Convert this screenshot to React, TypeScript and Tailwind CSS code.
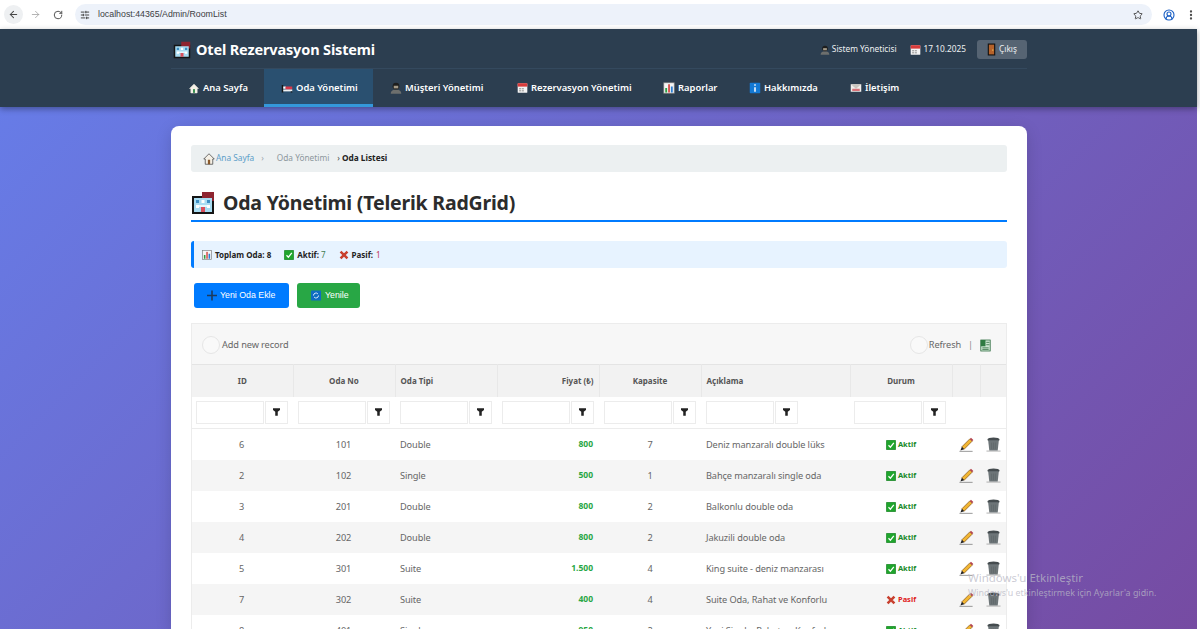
import { ArrowLeft, ArrowRight, RotateCw, Star, CircleUserRound, EllipsisVertical, SlidersHorizontal } from "lucide-react";
import { ReactNode } from "react";

function HotelIcon({ size }: { size: number }) {
  return (
    <svg width={size} height={size} viewBox="0 0 24 24" className="shrink-0">
      <rect x="1" y="5" width="22" height="18" fill="#151515" />
      <rect x="11" y="1" width="12" height="9" fill="#8e2430" />
      <rect x="3" y="7" width="18" height="14" fill="#a9dcf2" />
      <rect x="5" y="9" width="3" height="3" fill="#3f8fc4" />
      <rect x="10.500" y="9" width="3" height="3" fill="#fff" />
      <rect x="16" y="9" width="3" height="3" fill="#3f8fc4" />
      <rect x="5" y="14" width="3" height="3" fill="#fff" />
      <rect x="16" y="14" width="3" height="3" fill="#fff" />
      <rect x="8" y="14" width="8" height="2" fill="#e8f6fc" />
      <rect x="10" y="16" width="4" height="5" fill="#d94f5c" />
    </svg>
  );
}

function HomeIcon({ light }: { light?: boolean }) {
  return (
    <svg width={light ? 10 : 12} height={light ? 11 : 12} viewBox="0 0 16 16" className="shrink-0">
      <path d="M8 1 1 8h2v7h10V8h2z" fill="#f5f0e6" stroke={light ? "#f5f0e6" : "#444"} />
      <rect x="6.500" y="9" width="3" height="6" fill={light ? "#2f8a4a" : "#8a5a2b"} />
    </svg>
  );
}

function BedIcon() {
  return (
    <svg width="12" height="12" viewBox="0 0 16 16" className="shrink-0">
      <rect x="1" y="4" width="2" height="10" fill="#151515" />
      <rect x="3" y="6" width="3.500" height="3" fill="#fff" />
      <rect x="6" y="6" width="9" height="4" fill="#d8384a" />
      <rect x="3" y="10" width="12" height="2.500" fill="#f1f1f1" />
      <rect x="13" y="12.500" width="2" height="1.500" fill="#151515" />
    </svg>
  );
}

function BustIcon({ size = 12 }: { size?: number }) {
  return (
    <svg width={size} height={size} viewBox="0 0 16 16" className="shrink-0">
      <path d="M1 15.500c0-4 3.500-5.500 7-5.500s7 1.500 7 5.500z" fill="#6d6f6d" />
      <circle cx="8" cy="5.500" r="4.500" fill="#1d1d1d" />
      <rect x="5" y="5" width="6" height="3.500" fill="#a49a88" />
    </svg>
  );
}

function CalendarIcon() {
  return (
    <svg width="11" height="12" viewBox="0 0 16 16" className="shrink-0">
      <rect x="1" y="1" width="14" height="14" rx="1" fill="#f3f3f3" />
      <rect x="1" y="1" width="14" height="5" fill="#d83b3b" />
      <rect x="3" y="8" width="3" height="2" fill="#aaa" />
      <rect x="7" y="8" width="3" height="2" fill="#aaa" />
      <rect x="3" y="11" width="3" height="2" fill="#aaa" />
      <rect x="7" y="11" width="3" height="2" fill="#aaa" />
    </svg>
  );
}

function ChartIcon({ size = 12 }: { size?: number }) {
  return (
    <svg width={size} height={size} viewBox="0 0 16 16" className="shrink-0">
      <rect x="1" y="1" width="14" height="14" fill="#f5f5f5" stroke="#777" />
      <rect x="3" y="8" width="2.500" height="6" fill="#2f9e44" />
      <rect x="6.800" y="3" width="2.500" height="11" fill="#d9534f" />
      <rect x="10.500" y="6" width="2.500" height="8" fill="#2d7fd3" />
    </svg>
  );
}

function InfoIcon() {
  return (
    <svg width="12" height="12" viewBox="0 0 16 16" className="shrink-0">
      <rect x="1" y="1" width="14" height="14" rx="1" fill="#1479d4" />
      <rect x="7" y="3" width="2" height="2" fill="#fff" />
      <rect x="7" y="7" width="2" height="6" fill="#fff" />
    </svg>
  );
}

function MailIcon() {
  return (
    <svg width="12" height="12" viewBox="0 0 16 16" className="shrink-0">
      <rect x="1" y="3" width="14" height="10" fill="#f1efec" />
      <path d="M1 3h14L8 9z" fill="#c9c5c0" />
      <rect x="3" y="9" width="10" height="3" fill="#d8737a" />
    </svg>
  );
}

function DoorIcon() {
  return (
    <svg width="9" height="13" viewBox="0 0 12 16" className="shrink-0">
      <rect x="1" y="0" width="10" height="16" fill="#111" />
      <rect x="2.500" y="1.500" width="7" height="13" fill="#b5622a" />
      <rect x="7" y="8" width="1.500" height="1.500" fill="#f0d060" />
    </svg>
  );
}

function CheckBox({ size = 10 }: { size?: number }) {
  return (
    <svg width={size} height={size} viewBox="0 0 16 16" className="shrink-0">
      <rect x="0.500" y="0.500" width="15" height="15" rx="1" fill="#1fa52c" stroke="#14781e" />
      <path d="M4 8.500 7 11.500 12.500 4.500" fill="none" stroke="#fff" strokeWidth="2" />
    </svg>
  );
}

function CrossMark({ size = 10 }: { size?: number }) {
  return (
    <svg width={size} height={size} viewBox="0 0 16 16" className="shrink-0">
      <path d="M2.500 2.500 13.500 13.500M13.500 2.500 2.500 13.500" stroke="#c8402f" strokeWidth="4" />
    </svg>
  );
}

function PlusIcon() {
  return (
    <svg width="10" height="11" viewBox="0 0 16 16" className="shrink-0">
      <path d="M8 0v16M0 8h16" stroke="#1d3a5c" strokeWidth="2.500" />
    </svg>
  );
}

function SyncIcon() {
  return (
    <svg width="10" height="11" viewBox="0 0 16 16" className="shrink-0">
      <rect width="16" height="16" rx="1" fill="#0f6cc0" />
      <path d="M4 8a4 4 0 0 1 7-2.600M12 8a4 4 0 0 1-7 2.600" fill="none" stroke="#e8f3ff" strokeWidth="1.500" />
    </svg>
  );
}

function FilterIcon() {
  return (
    <svg width="7" height="8" viewBox="0 0 10 11">
      <path d="M0 0h10v2.500L6.800 5v6H3.200V5L0 2.500z" fill="#222" />
    </svg>
  );
}

function PencilIcon() {
  return (
    <svg width="15" height="15" viewBox="0 0 16 16" className="shrink-0">
      <path d="M0.500 15.300h14" stroke="#777" strokeWidth="0.800" />
      <path d="M3 10.500 11.500 2 14 4.500 5.500 13z" fill="#f2b632" stroke="#7a4a10" strokeWidth="0.700" />
      <path d="M11.500 2 12.800 0.700 15.300 3.200 14 4.500z" fill="#b5454f" />
      <path d="M3 10.500 1.500 14.500 5.500 13z" fill="#222" />
    </svg>
  );
}

function TrashIcon() {
  return (
    <svg width="15" height="15" viewBox="0 0 16 16" className="shrink-0">
      <path d="M0.500 15h15" stroke="#999" strokeWidth="0.800" />
      <ellipse cx="8" cy="2.800" rx="6.500" ry="2.300" fill="#454c4f" />
      <path d="M2.300 3.500h11.400L12.500 14.500h-9z" fill="#6d7578" />
      <path d="M6 6v7M8 6v7M10 6v7" stroke="#5d6568" strokeWidth="0.700" />
    </svg>
  );
}

function ExcelIcon() {
  return (
    <svg width="11" height="13" viewBox="0 0 14 16">
      <rect x="1" y="1" width="12" height="14" fill="#cfe6d4" stroke="#2f6d40" />
      <rect x="1" y="1" width="6" height="8" fill="#2f7a42" />
      <path d="M3 11h8M3 13h8M8 4h4M8 7h4" stroke="#2f6d40" />
    </svg>
  );
}

function NavItem({ icon, label, active, className }: { icon: ReactNode; label: string; active?: boolean; className: string }) {
  return (
    <div
      className={`flex h-[38px] items-center gap-[3px] border-b-[3px] pl-[17px] pt-[3px] text-[9.400px] font-semibold text-white ${
        active ? "border-[#3498db] bg-[#2a5070]" : "border-transparent"
      } ${className}`}
    >
      <span className="flex w-[12px] justify-center">{icon}</span>
      <span>{label}</span>
    </div>
  );
}

const columns = [
  { label: "ID", w: "w-[101px]", align: "text-center" },
  { label: "Oda No", w: "w-[102px]", align: "text-center" },
  { label: "Oda Tipi", w: "w-[102px]", align: "text-left" },
  { label: "Fiyat (₺)", w: "w-[102px]", align: "text-right" },
  { label: "Kapasite", w: "w-[102px]", align: "text-center" },
  { label: "Açıklama", w: "w-[149px]", align: "text-left" },
  { label: "Durum", w: "w-[102px]", align: "text-center" },
  { label: "", w: "w-[28px]", align: "text-center" },
  { label: "", w: "w-[26px]", align: "text-center" },
];

const rooms = [
  { id: 6, no: 101, type: "Double", price: "800", cap: 7, desc: "Deniz manzaralı double lüks", active: true },
  { id: 2, no: 102, type: "Single", price: "500", cap: 1, desc: "Bahçe manzaralı single oda", active: true },
  { id: 3, no: 201, type: "Double", price: "800", cap: 2, desc: "Balkonlu double oda", active: true },
  { id: 4, no: 202, type: "Double", price: "800", cap: 2, desc: "Jakuzili double oda", active: true },
  { id: 5, no: 301, type: "Suite", price: "1.500", cap: 4, desc: "King suite - deniz manzarası", active: true },
  { id: 7, no: 302, type: "Suite", price: "400", cap: 4, desc: "Suite Oda, Rahat ve Konforlu", active: false },
  { id: 8, no: 401, type: "Single", price: "950", cap: 2, desc: "Yeni Single, Rahat ve Konforlu", active: true },
];

function FilterCell({ tight }: { tight?: boolean }) {
  return (
    <td className={`h-[32px] align-middle ${tight ? "pl-[4px]" : "pl-[5px]"}`}>
      <div className="flex gap-[1px]">
        <div className="h-[23px] w-[68px] border border-[#ececec] bg-white" />
        <div className="flex h-[23px] w-[23px] items-center justify-center border border-[#ececec] bg-white">
          <FilterIcon />
        </div>
      </div>
    </td>
  );
}

export default function App() {
  return (
    <div className="relative flex h-[629px] w-[1200px] flex-col overflow-hidden bg-white font-['Noto_Sans',sans-serif]">
      {/* browser bar */}
      <div className="flex h-[29px] shrink-0 items-center bg-white text-[#474747]">
        <div className="ml-[4px] flex h-[19px] w-[19px] items-center justify-center rounded-full bg-[#eef0f2]">
          <ArrowLeft size={11} strokeWidth={2.2} />
        </div>
        <ArrowRight size={11} strokeWidth={1.6} className="ml-[7px] text-[#9a9a9a]" />
        <RotateCw size={10} strokeWidth={2.2} className="ml-[12px]" />
        <div className="ml-[12px] flex h-[21px] w-[1077px] items-center rounded-full bg-[#edf2fa] pl-[5px] pr-[9px]">
          <SlidersHorizontal size={10} strokeWidth={2.4} />
          <span className="ml-[8px] font-['Liberation_Sans',sans-serif] text-[8.800px] text-[#3c4043]">localhost:44365/Admin/RoomList</span>
          <Star size={10} strokeWidth={2.2} className="ml-auto" />
        </div>
        <CircleUserRound size={12} strokeWidth={2.2} className="ml-[11px] text-[#1a5fc4]" />
        <EllipsisVertical size={12} strokeWidth={2.6} className="ml-[10px]" />
      </div>

      <div className="relative flex min-h-0 flex-1 flex-col pr-[3px]">
        <div className="flex min-h-0 flex-1 flex-col bg-[linear-gradient(135deg,#667eea_0%,#764ba2_100%)]">
          {/* header */}
          <header className="h-[78px] shrink-0 bg-[#2c3e50] shadow-[0_2px_6px_rgba(0,0,0,0.35)]">
            <div className="ml-[171px] mr-[170px] flex h-[40px] items-center border-b border-[#34495e] pl-[2px] pt-[2px]">
              <HotelIcon size={18} />
              <span className="ml-[5px] text-[14.500px] font-bold tracking-[-0.15px] text-white">Otel Rezervasyon Sistemi</span>
              <div className="ml-auto flex items-center text-[8.300px] text-[#ecf0f1]">
                <BustIcon size={10} />
                <span className="ml-[2px]">Sistem Yöneticisi</span>
                <span className="ml-[13px]"><CalendarIcon /></span>
                <span className="ml-[3px]">17.10.2025</span>
                <div className="ml-[11px] flex h-[19px] w-[50px] items-center justify-center gap-[3px] rounded-[3px] bg-[#566473]">
                  <DoorIcon />
                  <span>Çıkış</span>
                </div>
              </div>
            </div>
            <nav className="ml-[171px] flex">
              <NavItem icon={<HomeIcon light />} label="Ana Sayfa" className="w-[93px]" />
              <NavItem icon={<BedIcon />} label="Oda Yönetimi" active className="w-[109px]" />
              <NavItem icon={<BustIcon />} label="Müşteri Yönetimi" className="w-[126px]" />
              <NavItem icon={<CalendarIcon />} label="Rezervasyon Yönetimi" className="w-[147px]" />
              <NavItem icon={<ChartIcon />} label="Raporlar" className="w-[86px]" />
              <NavItem icon={<InfoIcon />} label="Hakkımızda" className="w-[101px]" />
              <NavItem icon={<MailIcon />} label="İletişim" className="w-[81px]" />
            </nav>
          </header>

          {/* main card */}
          <main className="ml-[171px] mr-[170px] mt-[19px] min-h-0 flex-1 overflow-hidden rounded-t-[8px] bg-white px-[20px] pt-[19px] shadow-[0_4px_16px_rgba(0,0,0,0.15)]">
            <div className="flex h-[27px] items-center rounded-[3px] bg-[#ecf0f1] pl-[12px] text-[8.300px]">
              <HomeIcon />
              <span className="ml-[1px] text-[#5d9fc9]">Ana Sayfa</span>
              <span className="ml-[7px] text-[#9aa5ab]">›</span>
              <span className="ml-[13px] text-[#8d979d]">Oda Yönetimi</span>
              <span className="ml-[8px] text-[#444]">›</span>
              <span className="ml-[2px] font-bold text-[#222]">Oda Listesi</span>
            </div>

            <div className="mt-[16px] flex h-[34px] items-center border-b-2 border-[#007bff] pb-[3px]">
              <HotelIcon size={24} />
              <h1 className="ml-[8px] text-[19.500px] font-bold tracking-[-0.2px] text-[#2c2c2c]">Oda Yönetimi (Telerik RadGrid)</h1>
            </div>

            <div className="mt-[19px] flex h-[27px] items-center rounded-[3px] border-l-[3px] border-[#007bff] bg-[#e7f3ff] pl-[8px] pt-[1px] text-[8px] text-[#222]">
              <ChartIcon size={10} />
              <b className="ml-[3px]">Toplam Oda: 8</b>
              <span className="ml-[13px]"><CheckBox /></span>
              <b className="ml-[3px]">Aktif:</b>
              <span className="ml-[2px] text-[#3f7d50]">7</span>
              <span className="ml-[13px]"><CrossMark /></span>
              <b className="ml-[3px]">Pasif:</b>
              <span className="ml-[3px] text-[#c2365a]">1</span>
            </div>

            <div className="ml-[3px] mt-[15px] flex gap-[8px] font-['Liberation_Sans',sans-serif] text-[8.800px] text-white">
              <div className="flex h-[25px] w-[95px] items-center gap-[3px] rounded-[3px] bg-[#007bff] pl-[13px]">
                <PlusIcon />
                <span>Yeni Oda Ekle</span>
              </div>
              <div className="flex h-[25px] w-[63px] items-center gap-[4px] rounded-[3px] bg-[#28a745] pl-[14px]">
                <SyncIcon />
                <span>Yenile</span>
              </div>
            </div>

            {/* grid */}
            <div className="mt-[15px] w-full border-l border-r border-t border-[#ececec] text-[9.200px] tracking-[-0.1px] text-[#666]">
              <div className="flex h-[40px] items-center bg-[#f7f7f7] pl-[10px] pr-[15px] pt-[2px]">
                <div className="h-[18px] w-[18px] rounded-full border border-[#e6e6e6] bg-[#f9f9f9]" />
                <span className="ml-[2px]">Add new record</span>
                <div className="ml-auto h-[18px] w-[18px] rounded-full border border-[#e6e6e6] bg-[#f9f9f9]" />
                <span className="ml-[1px]">Refresh</span>
                <span className="ml-[7px] mr-[7px] text-[#888]">|</span>
                <ExcelIcon />
              </div>
              <table className="w-[814px] table-fixed border-collapse">
                <colgroup>
                  {columns.map((c, i) => (
                    <col key={i} className={c.w} />
                  ))}
                </colgroup>
                <thead>
                  <tr className="h-[32px] border-t border-[#e4e4e4] bg-[#f2f2f2]">
                    {columns.map((c, i) => (
                      <th key={i} className={`border-l border-[#e8e8e8] px-[5px] text-[8px] font-bold tracking-normal text-[#555] first:border-l-0 ${c.align}`}>
                        {c.label}
                      </th>
                    ))}
                  </tr>
                  <tr className="border-b border-[#ececec]">
                    <FilterCell tight />
                    <FilterCell />
                    <FilterCell />
                    <FilterCell />
                    <FilterCell />
                    <FilterCell />
                    <FilterCell tight />
                    <td />
                    <td />
                  </tr>
                </thead>
                <tbody>
                  {rooms.map((r, i) => (
                    <tr key={r.id} className={`h-[31px] ${i % 2 === 1 ? "bg-[#f5f5f5]" : "bg-white"}`}>
                      <td className="pr-[2px] pt-[1px] text-center">{r.id}</td>
                      <td className="pr-[1px] pt-[1px] text-center">{r.no}</td>
                      <td className="px-[5px] pt-[1px]">{r.type}</td>
                      <td className="pr-[6px] pt-[1px] text-right text-[8.500px] font-bold tracking-normal text-[#28a745]">{r.price}</td>
                      <td className="pt-[1px] text-center">{r.cap}</td>
                      <td className="px-[5px] pt-[1px] whitespace-nowrap">{r.desc}</td>
                      <td className="text-center">
                        <span className={`inline-flex items-center gap-[2px] align-middle text-[7.500px] font-bold tracking-normal ${r.active ? "text-[#1a8a2a]" : "text-[#e02020]"}`}>
                          {r.active ? <CheckBox /> : <CrossMark />}
                          {r.active ? "Aktif" : "Pasif"}
                        </span>
                      </td>
                      <td><div className="flex justify-center"><PencilIcon /></div></td>
                      <td><div className="flex justify-center"><TrashIcon /></div></td>
                    </tr>
                  ))}
                </tbody>
              </table>
            </div>
          </main>
        </div>

        {/* activation watermark */}
        <div className="pointer-events-none absolute left-[968px] top-[541px] text-[#b9b9c6]/75">
          <div className="text-[11.500px] leading-[16px]">Windows'u Etkinleştir</div>
          <div className="text-[8.900px] leading-[14px]">Windows'u etkinleştirmek için Ayarlar'a gidin.</div>
        </div>
      </div>
    </div>
  );
}
